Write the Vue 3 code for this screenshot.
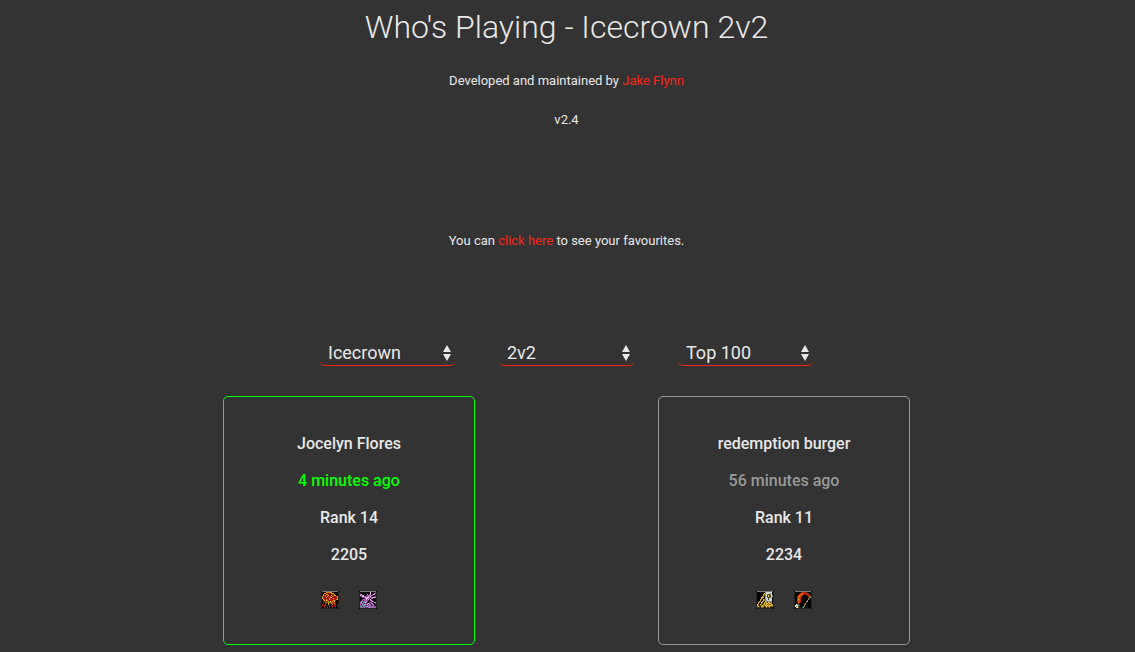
<script setup>
import { ref } from 'vue'

const realm = ref('Icecrown')
const bracket = ref('2v2')
const limit = ref('Top 100')

const filters = [
  { id: 'realm', label: 'Realm', model: realm, options: ['Icecrown', 'Lordaeron', 'Blackrock'] },
  { id: 'bracket', label: 'Bracket', model: bracket, options: ['2v2', '3v3', '5v5'] },
  { id: 'limit', label: 'Teams shown', model: limit, options: ['Top 100', 'Top 200', 'Top 500'] },
]

const teams = [
  { name: 'Jocelyn Flores', seen: '4 minutes ago', rank: 14, rating: 2205, online: true, classes: ['elemental', 'arcane'] },
  { name: 'redemption burger', seen: '56 minutes ago', rank: 11, rating: 2234, online: false, classes: ['discipline', 'marksmanship'] },
]

// Each icon is a 16x16 pixel map; letters index the palette, dots stay black.
const palette = {
  r: '#c01608', d: '#6d1007', y: '#c9a414', o: '#d0560c',
  p: '#a45aaa', l: '#e3a2e2', v: '#5f2a67', g: '#48b08a',
  G: '#94720e', Y: '#dcb62e', W: '#d0d3d6', S: '#85898c', K: '#3f3d1f', B: '#43350a',
  R: '#c8240a', t: '#268d7c', w: '#e9e1cb', n: '#97865a',
}

const pixels = {
  elemental: [
    '....yyoyyy......',
    '..yydrdrdyyy....',
    '.yddyyrddrroy...',
    '.yrydryddydryy..',
    'yrrydyrrodydrroy',
    'ydddydrdyyrdddry',
    'yorrrdryrdryrrdy',
    '.yrdyrdyrdrrrryy',
    '.ryryydrrdryyr..',
    '.drydryryryrydd.',
    '.r.ryryryyryr...',
    '.d.rd.yr.yr.yr..',
    'r..r..yr..y.rr.r',
    'r.rr.d.r.rd.rd.r',
    'd.rd.r.r.rr.dr.d',
    '..d..d.d..d..d..',
  ],
  arcane: [
    '..........l....v',
    'v.....v...l...lp',
    'pl.....p.pl.vlp.',
    'lpll..vpppppp...',
    'vpllppvplplv..vp',
    '..vppllllppplllp',
    '....vpllpp.ppv..',
    '..vppplpl.lv....',
    '.vpvppppv.plv...',
    'vpgppplv..vplp..',
    'plvpglp..vpp.vpl',
    'ppppvpvplpvpl..v',
    'pvgplpplvgpvpp..',
    'ppppgpvppppvvpv.',
    'gpvpppglppgppppv',
    'ppgppvpvplpppgpp',
  ],
  discipline: [
    '........SWWWWWW.',
    '.......YSWWWWSW.',
    '......YGSWSKKSW.',
    '......YGSWKYGKWS',
    '.....YG.SWKYGKWS',
    '....YYG.SWSKKSW.',
    '....YG..SWWKWWW.',
    '...YG.YGSWWKWWW.',
    '...Y..YGSSWWWWW.',
    '..YG.YG.YSSSSSS.',
    '.YG.YG.YGYBYYGG.',
    '.Y..YG.YGYYGYYG.',
    'YG.YG.YYGYGYBGYG',
    'YG.GBYGGYYYGYYYY',
    'GYGBYYYBGYGYYGBG',
    'BBB.GGB.BGBBGB..',
  ],
  marksmanship: [
    '......dRRRRd....',
    '.....RooRRRRRd..',
    '...dRoyoRddRRRd.',
    '...RooRd....RRrd',
    '..Royord.....Rot',
    '..RooR........ty',
    '..RooR.......nt.',
    '..RyoR.......n..',
    '..RooR......n...',
    '..Roor.....nn...',
    '..RoRd.....n....',
    '..dRd.....n.....',
    '.wtt.....nn.....',
    'wwwtt....n......',
    'wnwd....tn......',
    '.wwnd..tt.......',
  ],
}

const icons = Object.fromEntries(
  Object.entries(pixels).map(([name, rows]) => {
    const paths = {}
    rows.forEach((row, y) =>
      [...row].forEach((c, x) => {
        if (c !== '.') paths[c] = (paths[c] || '') + `M${x + 1} ${y + 1}h1v1h-1z`
      }),
    )
    return [name, Object.entries(paths).map(([c, d]) => ({ fill: palette[c], d }))]
  }),
)
</script>

<template>
  <main class="page">
    <h1>Who's Playing - Icecrown 2v2</h1>
    <p class="note">Developed and maintained by <a href="#author">Jake Flynn</a></p>
    <p class="note">v2.4</p>
    <p class="note favourites">You can <a href="#favourites">click here</a> to see your favourites.</p>

    <form class="filters">
      <div v-for="f in filters" :key="f.id" class="filter">
        <select :id="f.id" v-model="f.model.value" :aria-label="f.label">
          <option v-for="o in f.options" :key="o">{{ o }}</option>
        </select>
        <svg class="arrows" viewBox="0 0 10 18" aria-hidden="true">
          <path d="M5 1l4 7H1zM5 17l4-7H1z" />
        </svg>
      </div>
    </form>

    <section class="teams">
      <article v-for="t in teams" :key="t.name" class="team" :class="{ online: t.online }">
        <p>{{ t.name }}</p>
        <p class="seen">{{ t.seen }}</p>
        <p>Rank {{ t.rank }}</p>
        <p>{{ t.rating }}</p>
        <div class="classes">
          <svg v-for="c in t.classes" :key="c" viewBox="0 0 18 18" shape-rendering="crispEdges" role="img" :aria-label="c">
            <rect width="18" height="18" rx="1" fill="#050505" />
            <path d="M1 0h16v1H1z" fill="#77797b" />
            <path d="M0 1h1v16H0zM17 1h1v16h-1zM1 17h16v1H1z" fill="#242424" />
            <path v-for="p in icons[c]" :key="p.fill" :fill="p.fill" :d="p.d" />
          </svg>
        </div>
      </article>
    </section>
  </main>
</template>

<style>
body {
  background: #333;
}
</style>

<style scoped>
.page {
  padding: 7px 2px 7px 0;
  color: #e8e8e8;
  font-family: Roboto, "Liberation Sans", sans-serif;
  text-align: center;
}

h1 {
  margin: 0 0 26px;
  font-size: 32px;
  font-weight: 300;
  line-height: 40px;
}

.note {
  margin: 0 0 23px;
  font-size: 13px;
  line-height: 16px;
}

.note a {
  color: #fb2416;
  text-decoration: none;
}

.favourites {
  margin-top: 105px;
}

.filters {
  display: flex;
  justify-content: center;
  gap: 44px;
  margin-top: 91px;
}

.filter {
  position: relative;
  width: 135px;
}

select {
  display: block;
  width: 100%;
  height: 26px;
  padding: 0 24px 0 8px;
  border: 0 solid transparent;
  border-bottom: 1px solid #fb2400;
  border-radius: 5px;
  appearance: none;
  background: transparent;
  color: inherit;
  font-family: inherit;
  font-size: 18px;
}

option {
  background: #333;
}

.arrows {
  position: absolute;
  top: 4px;
  right: 3px;
  width: 10px;
  height: 18px;
  fill: #e8e8e8;
  pointer-events: none;
}

.teams {
  display: grid;
  grid-template-columns: 1fr 1fr;
  justify-items: center;
  max-width: 870px;
  margin: 30px auto 0;
}

.team {
  box-sizing: border-box;
  width: 252px;
  padding: 37px 16px 35px;
  border: 1px solid #999;
  border-radius: 5px;
}

.team p {
  margin: 0 0 17px;
  font-size: 16px;
  font-weight: 500;
  line-height: 20px;
}

.team .seen {
  color: #999;
}

.team.online {
  border-color: #0f0;
}

.online .seen {
  color: #0f0;
}

.team .classes {
  display: flex;
  justify-content: center;
  gap: 20px;
  margin-top: 26px;
}

.classes svg {
  width: 18px;
  height: 18px;
}
</style>
